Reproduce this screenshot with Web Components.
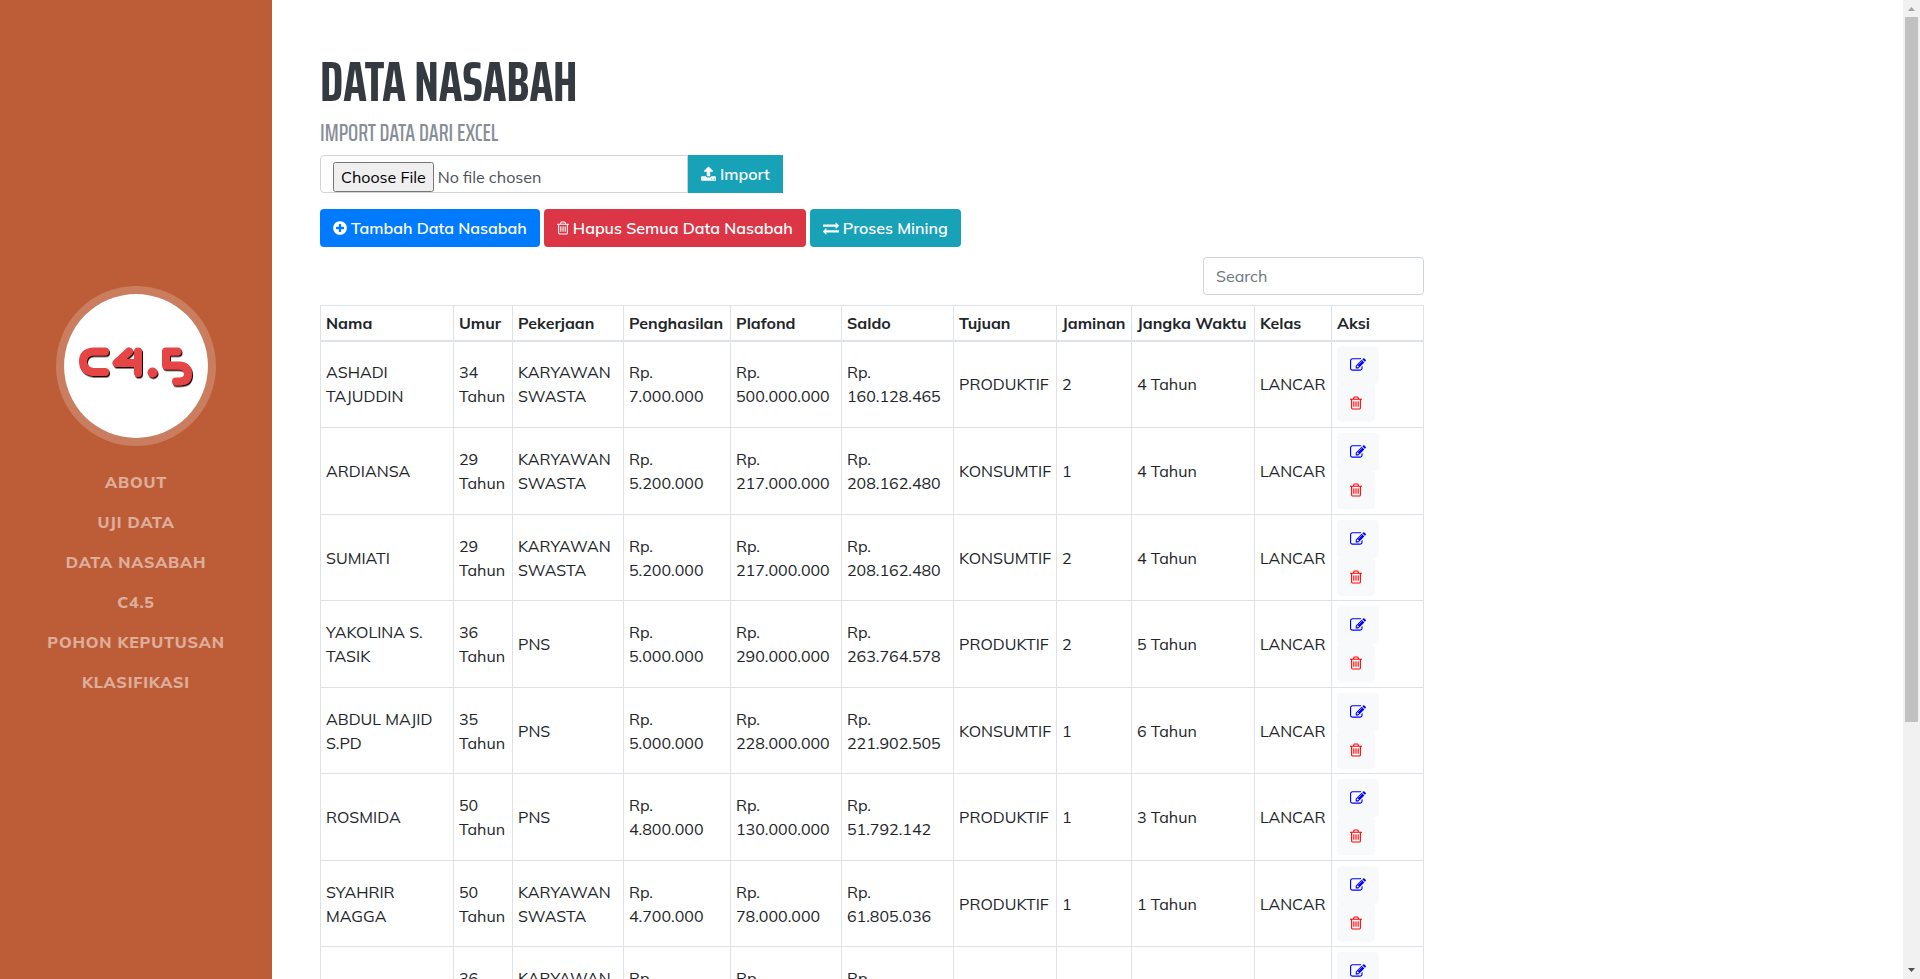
<!DOCTYPE html>
<html lang="id">
<head>
<meta charset="utf-8">
<title>Data Nasabah</title>
<style>
  html, body { height: 100%; margin: 0; }
  body {
    --brand: #bd5d38;
    --line: #dee2e6;
    --field-line: #ced4da;
    --heading-font: "Saira Extra Condensed", "Saira ExtraCondensed", "Saira Condensed", "Open Sans Condensed", "Roboto Condensed", sans-serif;
    --heading-font: "Saira ExtraCondensed", "Saira Extra Condensed", "Saira Condensed", "Open Sans Condensed", "Roboto Condensed", sans-serif;
    font: 400 16px/24px Muli, Mulish, Nunito, "Open Sans", sans-serif;
    color: #212529;
    background: #fff;
    overflow: hidden;
  }
</style>
</head>
<body>
<nasabah-app></nasabah-app>

<script>
const define = (name, html, setup) => {
  const template = document.createElement('template');
  template.innerHTML = html;
  customElements.define(name, class extends HTMLElement {
    connectedCallback() {
      if (this.shadowRoot) return;
      const root = this.attachShadow({ mode: 'open' });
      root.append(template.content.cloneNode(true));
      if (setup) setup(this, root);
    }
  });
};

const ICONS = {
  plus: [14, '0 0 1536 1792', '<path transform="translate(-128 0)" d="M1344 960v-128q0-26-19-45t-45-19h-256v-256q0-26-19-45t-45-19h-128q-26 0-45 19t-19 45v256h-256q-26 0-45 19t-19 45v128q0 26 19 45t45 19h256v256q0 26 19 45t45 19h128q26 0 45-19t19-45v-256h256q26 0 45-19t19-45zm320-64q0 209-103 385.500t-279.500 279.500-385.500 103-385.500-103-279.500-279.500-103-385.500 103-385.500 279.500-279.500 385.500-103 385.500 103 279.500 279.500 103 385.500z"/>'],
  trash: [12, '192 0 1408 1792', '<path d="M704 736v576q0 14-9 23t-23 9h-64q-14 0-23-9t-9-23v-576q0-14 9-23t23-9h64q14 0 23 9t9 23zm256 0v576q0 14-9 23t-23 9h-64q-14 0-23-9t-9-23v-576q0-14 9-23t23-9h64q14 0 23 9t9 23zm256 0v576q0 14-9 23t-23 9h-64q-14 0-23-9t-9-23v-576q0-14 9-23t23-9h64q14 0 23 9t9 23zm128 724v-948h-896v948q0 22 7 40.500t14.500 27 10.500 8.500h832q3 0 10.500-8.500t14.500-27 7-40.500zm-672-1076h448l-48-117q-7-9-17-11h-317q-10 2-17 11zm928 32v64q0 14-9 23t-23 9h-96v948q0 83-47 143.500t-113 60.500h-832q-66 0-113-58.500t-47-141.500v-952h-96q-14 0-23-9t-9-23v-64q0-14 9-23t23-9h309l70-167q15-37 54-63t79-26h320q40 0 79 26t54 63l70 167h309q14 0 23 9t9 23z"/>'],
  upload: [15, '64 0 1664 1792', '<path d="M1344 1472q0-26-19-45t-45-19-45 19-19 45 19 45 45 19 45-19 19-45zm256 0q0-26-19-45t-45-19-45 19-19 45 19 45 45 19 45-19 19-45zm128-224v320q0 40-28 68t-68 28h-1472q-40 0-68-28t-28-68v-320q0-40 28-68t68-28h427q21 56 70.500 92t110.500 36h256q61 0 110.500-36t70.500-92h427q40 0 68 28t28 68zm-325-648q-17 40-59 40h-256v448q0 26-19 45t-45 19h-256q-26 0-45-19t-19-45v-448h-256q-42 0-59-40-17-39 14-69l448-448q18-19 45-19t45 19l448 448q31 30 14 69z"/>'],
  exchange: [16, '0 0 1792 1792', '<path d="M1792 1184v192q0 13-9.500 22.500t-22.500 9.500h-1376v192q0 13-9.500 22.500t-22.500 9.500q-12 0-24-10l-319-320q-9-9-9-22 0-14 9-23l320-320q9-9 23-9 13 0 22.500 9.500t9.500 22.500v192h1376q13 0 22.500 9.500t9.500 22.500zm0-544q0 14-9 23l-320 320q-9 9-23 9-13 0-22.500-9.500t-9.500-22.500v-192h-1376q-13 0-22.500-9.500t-9.500-22.500v-192q0-13 9.500-22.500t22.500-9.500h1376v-192q0-14 9-23t23-9q12 0 24 10l319 319q9 9 9 23z"/>'],
  edit: [16, '0 0 1792 1792', '<path d="M888 1184l116-116-152-152-116 116v56h96v96h56zm440-720q-16-16-33 1l-350 350q-17 17-1 33t33-1l350-350q17-17 1-33zm80 594v190q0 119-84.500 203.500t-203.500 84.500h-832q-119 0-203.500-84.500t-84.500-203.500v-832q0-119 84.500-203.500t203.500-84.500h832q63 0 117 25 15 7 18 23 3 17-9 29l-49 49q-14 14-32 8-23-6-45-6h-832q-66 0-113 47t-47 113v832q0 66 47 113t113 47h832q66 0 113-47t47-113v-126q0-13 9-22l64-64q15-15 35-7t20 29zm-96-738l288 288-672 672h-288v-288zm444 132l-92 92-288-288 92-92q28-28 68-28t68 28l152 152q28 28 28 68t-28 68z"/>']
};

define('app-icon', `
  <style>
    :host { display: inline-block; height: 16px; flex: none; }
    svg { display: block; height: 16px; fill: currentColor; }
  </style>
  <svg aria-hidden="true"></svg>`, (host, root) => {
  const [width, box, shape] = ICONS[host.getAttribute('name')];
  const svg = root.querySelector('svg');
  svg.setAttribute('width', width);
  svg.setAttribute('viewBox', box);
  svg.innerHTML = shape;
});

define('app-button', `
  <style>
    :host { display: block; }
    button {
      display: flex; align-items: center; gap: 4px; box-sizing: border-box; height: 38px;
      padding: 0 13px; border: 0; border-radius: var(--radius, 4px);
      background: var(--tone, #17a2b8); color: var(--ink, #fff);
      font: 600 16px/24px Muli, Mulish, Nunito, "Open Sans", sans-serif;
      white-space: nowrap; cursor: pointer;
    }
    :host([tone="primary"]) { --tone: #007bff; }
    :host([tone="danger"]) { --tone: #dc3545; }
    :host([tone="edit"]) { --tone: #f8f9fa; --ink: #00f; }
    :host([tone="delete"]) { --tone: #f8f9fa; --ink: #f00; }
    :host([square]) { --radius: 0; }
  </style>
  <button type="button"><slot></slot></button>`, (host, root) => {
  const button = root.querySelector('button');
  const icon = document.createElement('app-icon');
  icon.setAttribute('name', host.getAttribute('icon'));
  button.prepend(icon);
  if (host.title) button.setAttribute('aria-label', host.title);
});

define('brand-logo', `
  <style>
    :host {
      display: block; box-sizing: border-box; width: 160px; height: 160px;
      border: 8px solid rgba(255, 255, 255, .2); border-radius: 50%;
      background: #fff; background-clip: padding-box;
    }
    svg { display: block; width: 144px; height: 144px; }
    .mark { fill: none; stroke: #e64444; stroke-width: 8; stroke-linecap: round; stroke-linejoin: round; }
  </style>
  <svg viewBox="0 0 144 144" role="img" aria-label="Logo C4.5">
    <defs>
      <filter id="lift" x="-20%" y="-20%" width="140%" height="150%">
        <feDropShadow dx="1" dy="1.500" stdDeviation=".7" flood-color="#200" flood-opacity="1"/>
      </filter>
    </defs>
    <g class="mark" filter="url(#lift)">
      <path d="M41 57.500H29Q19 58.500 19 67.500T29 78H41"/>
      <path d="M65 57.500L52.500 69H74M74 57.500V79"/>
      <path d="M88.500 78.500h.01" stroke-width="10"/>
      <path d="M113.500 57.500H102V71.500H115Q124 72 124 80Q124 87.500 115 87.500H112"/>
    </g>
  </svg>`);

define('side-nav', `
  <style>
    :host {
      display: flex; flex-direction: column; align-items: center; justify-content: center;
      gap: 16px; box-sizing: border-box; padding-top: 8px; background: var(--brand);
    }
    nav { display: flex; flex-direction: column; align-items: center; }
    a {
      padding: 8px; color: rgba(255, 255, 255, .5); text-decoration: none;
      font-weight: 800; letter-spacing: .05em; text-transform: uppercase;
    }
  </style>
  <brand-logo></brand-logo>
  <nav>
    <a href="#about">About</a>
    <a href="#uji">Uji Data</a>
    <a href="#nasabah">Data Nasabah</a>
    <a href="#c45">C4.5</a>
    <a href="#pohon">Pohon Keputusan</a>
    <a href="#klasifikasi">Klasifikasi</a>
  </nav>`);

define('import-form', `
  <style>
    :host { display: flex; }
    input {
      box-sizing: border-box; width: 368px; height: 38px; padding: 6px 12px;
      border: 1px solid var(--field-line); border-radius: 4px 0 0 4px;
      font: inherit; color: #495057; background: #fff; overflow: hidden;
    }
    input::file-selector-button { box-sizing: border-box; height: 30px; font: inherit; }
  </style>
  <input type="file" aria-label="File Excel">
  <app-button icon="upload" square>Import</app-button>`);

define('search-field', `
  <style>
    :host { display: block; }
    input {
      display: block; box-sizing: border-box; width: 221px; height: 38px; padding: 6px 12px;
      border: 1px solid var(--field-line); border-radius: 4px; font: inherit; color: #495057;
    }
    input::placeholder { color: #6c757d; opacity: 1; }
  </style>
  <input type="search" placeholder="Search" aria-label="Search">`);

const COLUMNS = [
  ['Nama', 133], ['Umur', 59], ['Pekerjaan', 111], ['Penghasilan', 107], ['Plafond', 111], ['Saldo', 112],
  ['Tujuan', 103], ['Jaminan', 75], ['Jangka Waktu', 123], ['Kelas', 77], ['Aksi', 92]
];
const ROWS = [
  ['ASHADI TAJUDDIN', '34 Tahun', 'KARYAWAN SWASTA', 'Rp. 7.000.000', 'Rp. 500.000.000', 'Rp. 160.128.465', 'PRODUKTIF', '2', '4 Tahun', 'LANCAR'],
  ['ARDIANSA', '29 Tahun', 'KARYAWAN SWASTA', 'Rp. 5.200.000', 'Rp. 217.000.000', 'Rp. 208.162.480', 'KONSUMTIF', '1', '4 Tahun', 'LANCAR'],
  ['SUMIATI', '29 Tahun', 'KARYAWAN SWASTA', 'Rp. 5.200.000', 'Rp. 217.000.000', 'Rp. 208.162.480', 'KONSUMTIF', '2', '4 Tahun', 'LANCAR'],
  ['YAKOLINA S. TASIK', '36 Tahun', 'PNS', 'Rp. 5.000.000', 'Rp. 290.000.000', 'Rp. 263.764.578', 'PRODUKTIF', '2', '5 Tahun', 'LANCAR'],
  ['ABDUL MAJID S.PD', '35 Tahun', 'PNS', 'Rp. 5.000.000', 'Rp. 228.000.000', 'Rp. 221.902.505', 'KONSUMTIF', '1', '6 Tahun', 'LANCAR'],
  ['ROSMIDA', '50 Tahun', 'PNS', 'Rp. 4.800.000', 'Rp. 130.000.000', 'Rp. 51.792.142', 'PRODUKTIF', '1', '3 Tahun', 'LANCAR'],
  ['SYAHRIR MAGGA', '50 Tahun', 'KARYAWAN SWASTA', 'Rp. 4.700.000', 'Rp. 78.000.000', 'Rp. 61.805.036', 'PRODUKTIF', '1', '1 Tahun', 'LANCAR'],
  ['', '36 Tahun', 'KARYAWAN SWASTA', 'Rp. 0', 'Rp. 0', 'Rp. 0', '', '', '', '']
];

define('nasabah-table', `
  <style>
    :host { display: block; }
    table { width: 100%; table-layout: fixed; border-collapse: collapse; }
    th, td { padding: 5px; border: 1px solid var(--line); text-align: left; vertical-align: middle; }
    th { height: 24px; border-bottom-width: 2px; font-weight: 700; white-space: nowrap; }
    tr:nth-child(odd) td { padding-bottom: 4px; }
    tr:first-child td { padding: 4px 5px 5px; }
    td:nth-child(n+4):nth-child(-n+6) { white-space: pre-line; }
    .actions { display: flex; flex-direction: column; align-items: flex-start; }
  </style>
  <table>
    <colgroup></colgroup>
    <thead><tr></tr></thead>
    <tbody></tbody>
  </table>`, (host, root) => {
  root.querySelector('colgroup').innerHTML = COLUMNS.map(([, w]) => `<col style="width:${w}px">`).join('');
  root.querySelector('thead tr').innerHTML = COLUMNS.map(([t]) => `<th scope="col">${t}</th>`).join('');
  const actions = `<td><div class="actions">
    <app-button tone="edit" icon="edit" title="Ubah"></app-button>
    <app-button tone="delete" icon="trash" title="Hapus"></app-button></div></td>`;
  root.querySelector('tbody').innerHTML = ROWS.map(row =>
    `<tr>${row.map(cell => `<td>${cell.replace('Rp. ', 'Rp.\n')}</td>`).join('')}${actions}</tr>`).join('');
});

define('scroll-rail', `
  <style>
    :host {
      display: grid; grid-template-rows: 17px minmax(0, 705fr) minmax(0, 240fr) 17px;
      background: #f1f1f1;
    }
    .thumb { margin: 0 2px; background: #c1c1c1; }
    svg { display: block; width: 17px; height: 17px; }
  </style>
  <svg viewBox="0 0 17 17" fill="#a3a3a3"><path d="M5 11h7L8.500 7z"/></svg>
  <div class="thumb"></div>
  <div></div>
  <svg viewBox="0 0 17 17" fill="#505050"><path d="M5 6h7L8.500 10z"/></svg>`);

define('nasabah-page', `
  <style>
    :host { display: block; box-sizing: border-box; min-width: 0; padding: 48px; overflow: hidden; }
    section { max-width: 1104px; }
    h1, h2 { margin: 0; font-family: var(--heading-font); text-transform: uppercase; }
    h1 { margin-bottom: 6px; font-weight: 700; font-size: 56px; line-height: 67px; color: #343a40; }
    h2 { margin-bottom: 10px; font-weight: 500; font-size: 24px; line-height: 24px; color: #868e96; }
    .tools { display: flex; gap: 4px; margin: 16px 0 10px; }
    .filter { display: flex; justify-content: flex-end; margin-bottom: 10px; }
  </style>
  <section>
    <h1>Data Nasabah</h1>
    <h2>Import Data Dari Excel</h2>
    <import-form></import-form>
    <div class="tools">
      <app-button tone="primary" icon="plus">Tambah Data Nasabah</app-button>
      <app-button tone="danger" icon="trash">Hapus Semua Data Nasabah</app-button>
      <app-button icon="exchange">Proses Mining</app-button>
    </div>
    <div class="filter"><search-field></search-field></div>
    <nasabah-table></nasabah-table>
  </section>`);

define('nasabah-app', `
  <style>
    :host { display: grid; grid-template-columns: 272px minmax(0, 1fr) 17px; height: 100vh; }
  </style>
  <side-nav></side-nav>
  <nasabah-page></nasabah-page>
  <scroll-rail></scroll-rail>`);
</script>
</body>
</html>
